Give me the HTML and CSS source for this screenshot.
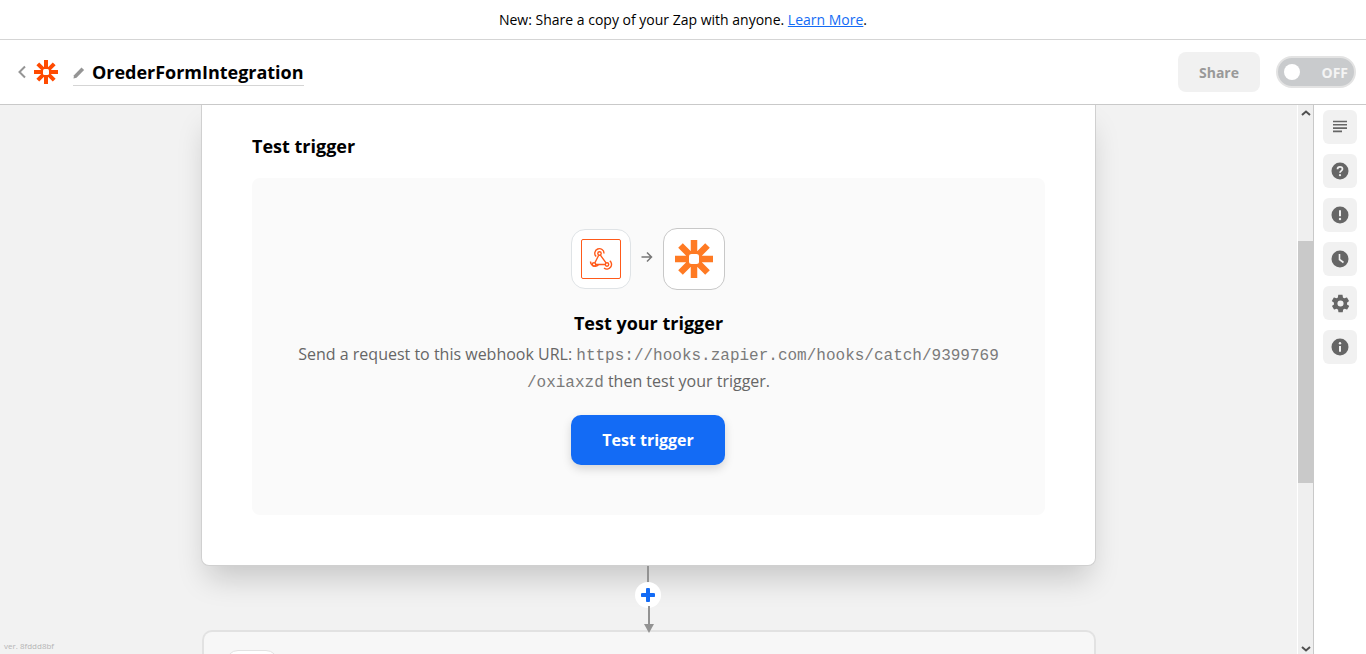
FILE: index.html
```html
<!DOCTYPE html>
<html lang="en">
<head>
    <meta charset="UTF-8">
    <title>OrederFormIntegration</title>
    <link rel="stylesheet" href="styles.css">
</head>
<body>
    <div class="banner">New: Share a copy of your Zap with anyone. <a href="#">Learn More</a>.</div>

    <header class="topbar">
        <svg class="back" width="10" height="14" viewBox="0 0 10 14"><path d="M8 1.500 2.500 7 8 12.500" fill="none" stroke="#959595" stroke-width="2"/></svg>
        <svg class="logo" width="24" height="24" viewBox="0 0 24 24">
            <path d="M12 0v24M0 12h24M3.800 3.800l16.400 16.400M20.200 3.800 3.800 20.200" stroke="#ff4a00" stroke-width="4"/>
            <rect x="9" y="9" width="6" height="6" rx="1.500" fill="#fff"/>
        </svg>
        <div class="zap-name">
            <svg width="12" height="13" viewBox="0 0 12 13"><path d="M0.500 12.500 1 9.300 8.500 1.500l2.600 2.600-7.600 7.700z" fill="#959595"/></svg>
            <span>OrederFormIntegration</span>
        </div>
        <div class="topbar-right">
            <button class="share">Share</button>
            <div class="toggle"><i></i><span>OFF</span></div>
        </div>
    </header>

    <div class="workspace">
        <main class="canvas">
            <section class="card">
                <h2>Test trigger</h2>
                <div class="test-box">
                    <div class="apps">
                        <div class="app-icon small">
                            <div class="hook-frame">
                                <svg width="24" height="24" viewBox="0 0 24 24" fill="none" stroke="#ff5a1a" stroke-width="1.400">
                                    <circle cx="10.500" cy="6.500" r="1.700"/>
                                    <circle cx="5" cy="17.500" r="1.700"/>
                                    <circle cx="18" cy="17.500" r="1.700"/>
                                    <path d="M9.700 8.200 5.900 15.800M6.900 17.500h9.200M11.400 8.200l5.600 7.700"/>
                                    <path d="M7.200 9.600A4.600 4.600 0 1 1 15 6.500M1.500 14.600A4.600 4.600 0 0 0 9.600 17.500M20.800 13.800A4.600 4.600 0 0 1 15 21"/>
                                </svg>
                            </div>
                        </div>
                        <svg class="arrow" width="12" height="12" viewBox="0 0 12 12"><path d="M0.500 6h10M6 1.500 10.500 6 6 10.500" fill="none" stroke="#777" stroke-width="1.500"/></svg>
                        <div class="app-icon big">
                            <svg width="40" height="40" viewBox="0 0 40 40">
                                <path d="M20 1v38M1 20h38M6.500 6.500l27 27M33.500 6.500l-27 27" stroke="#ff7a23" stroke-width="6.500"/>
                                <rect x="15" y="15" width="10" height="10" rx="2.500" fill="#fff"/>
                            </svg>
                        </div>
                    </div>
                    <h3>Test your trigger</h3>
                    <p>Send a request to this webhook URL: <code>https://hooks.zapier.com/hooks/catch/9399769<br>/oxiaxzd</code> then test your trigger.</p>
                    <button class="test-btn">Test trigger</button>
                </div>
            </section>

            <div class="connector">
                <div class="line top"></div>
                <div class="add">
                    <svg width="14" height="14" viewBox="0 0 14 14"><path d="M7 1.500v11M1.500 7h11" stroke="#136bf5" stroke-width="4" stroke-linecap="round"/></svg>
                </div>
                <div class="line bottom"></div>
                <div class="arrowhead"></div>
            </div>

            <section class="card next">
                <div class="next-icon"></div>
            </section>

            <div class="version">ver. 8fddd8bf</div>
        </main>

        <div class="scrollbar">
            <svg class="sb-up" width="10" height="6" viewBox="0 0 10 6"><path d="M1 5 5 1.500 9 5" fill="none" stroke="#505050" stroke-width="2"/></svg>
            <div class="thumb"></div>
            <svg class="sb-down" width="10" height="6" viewBox="0 0 10 6"><path d="M1 1 5 4.500 9 1" fill="none" stroke="#505050" stroke-width="2"/></svg>
        </div>

        <aside class="sidebar">
            <div class="side-btn">
                <svg width="18" height="18" viewBox="0 0 18 18"><path d="M2 3.500h14M2 6.800h14M2 10.100h14M2 13.400h9" stroke="#666" stroke-width="1.600"/></svg>
            </div>
            <div class="side-btn">
                <svg width="18" height="18" viewBox="0 0 18 18"><circle cx="9" cy="9" r="8.500" fill="#666"/><path d="M6.500 7.200C6.500 5.700 7.600 4.800 9 4.800s2.500.9 2.500 2.200c0 1.800-2.500 1.900-2.500 3.700" fill="none" stroke="#f1f1f1" stroke-width="1.700"/><circle cx="9" cy="13.200" r="1.100" fill="#f1f1f1"/></svg>
            </div>
            <div class="side-btn">
                <svg width="18" height="18" viewBox="0 0 18 18"><circle cx="9" cy="9" r="8.500" fill="#666"/><path d="M9 4.200v6" stroke="#f1f1f1" stroke-width="2"/><circle cx="9" cy="13" r="1.200" fill="#f1f1f1"/></svg>
            </div>
            <div class="side-btn">
                <svg width="18" height="18" viewBox="0 0 18 18"><circle cx="9" cy="9" r="8.500" fill="#666"/><path d="M8.500 4v5.500l4 3" fill="none" stroke="#f1f1f1" stroke-width="1.600"/></svg>
            </div>
            <div class="side-btn">
                <svg width="21" height="21" viewBox="0 0 24 24"><path fill="#666" d="M19.400 13c.1-.3.100-.7.100-1s0-.7-.1-1l2.100-1.600c.2-.2.200-.4.100-.6l-2-3.500c-.1-.2-.4-.3-.6-.2l-2.500 1c-.5-.4-1.100-.7-1.700-1l-.4-2.600c0-.3-.2-.5-.5-.5h-4c-.3 0-.5.200-.5.400l-.4 2.700c-.6.300-1.200.6-1.700 1l-2.500-1c-.2-.1-.5 0-.6.200l-2 3.500c-.1.200-.1.500.1.600L4.600 11c0 .3-.1.700-.1 1s0 .7.1 1l-2.100 1.600c-.2.200-.2.400-.1.600l2 3.500c.1.200.4.300.6.200l2.500-1c.5.400 1.100.7 1.700 1l.4 2.700c0 .2.200.4.500.4h4c.3 0 .5-.2.500-.4l.4-2.700c.6-.3 1.200-.6 1.700-1l2.500 1c.2.100.5 0 .6-.2l2-3.500c.1-.2.100-.5-.1-.6zM12 15.500a3.500 3.500 0 1 1 0-7 3.500 3.500 0 0 1 0 7z"/></svg>
            </div>
            <div class="side-btn">
                <svg width="18" height="18" viewBox="0 0 18 18"><circle cx="9" cy="9" r="8.500" fill="#666"/><circle cx="9" cy="5.200" r="1.200" fill="#f1f1f1"/><path d="M9 8v5.800" stroke="#f1f1f1" stroke-width="2"/></svg>
            </div>
        </aside>
    </div>
</body>
</html>
```

FILE: styles.css
```css
html, body {
    height: 100%;
}
body {
    margin: 0;
    font-family: "Open Sans", sans-serif;
    background-color: #fff;
    color: #000;
    overflow: hidden;
}
.banner {
    height: 39px;
    line-height: 39px;
    text-align: center;
    font-size: 14px;
    border-bottom: 1px solid #d5d5d5;
}
.banner a {
    color: #136bf5;
}
.topbar {
    height: 64px;
    display: flex;
    align-items: center;
    padding: 0 10px 0 17px;
    border-bottom: 1px solid #c9c9c9;
}
.back {
    margin-right: 7px;
}
.logo {
    margin-right: 15px;
}
.zap-name {
    display: flex;
    align-items: center;
    gap: 7px;
    height: 25px;
    border-bottom: 1px solid #d5d5d5;
    margin-top: 1px;
}
.zap-name span {
    font-size: 18px;
    font-weight: 700;
    line-height: 24px;
    letter-spacing: -0.02px;
}
.topbar-right {
    margin-left: auto;
    display: flex;
    align-items: center;
    gap: 16px;
}
.share {
    width: 82px;
    height: 40px;
    border: none;
    border-radius: 8px;
    background-color: #f1f1f1;
    color: #999;
    font-family: "Open Sans", sans-serif;
    font-size: 14px;
    font-weight: 700;
}
.toggle {
    width: 80px;
    height: 32px;
    box-sizing: border-box;
    border: 2px solid #e3e3e3;
    border-radius: 16px;
    background-color: #c9cbcd;
    display: flex;
    align-items: center;
    justify-content: space-between;
    padding: 0 6px;
}
.toggle i {
    width: 16px;
    height: 16px;
    border-radius: 50%;
    background-color: #fff;
}
.toggle span {
    color: #f4f4f4;
    font-size: 14px;
    font-weight: 700;
}
.workspace {
    display: flex;
    height: 550px;
    overflow: hidden;
}
.canvas {
    flex: 1;
    position: relative;
    background-color: #f2f2f2;
    border-right: 1px solid #fff;
    overflow: hidden;
}
.card {
    width: 895px;
    margin-left: 201px;
    box-sizing: border-box;
    background-color: #fff;
    border: 1px solid #d0d0d0;
    border-top: none;
    border-radius: 0 0 8px 8px;
    box-shadow: 0 18px 30px -6px rgba(0, 0, 0, 0.18);
    padding: 28px 50px 50px;
}
.card h2 {
    margin: 0 0 18px;
    font-size: 18px;
    line-height: 27px;
    font-weight: 700;
}
.test-box {
    height: 337px;
    box-sizing: border-box;
    background-color: #fafafa;
    border-radius: 8px;
    padding-top: 50px;
    display: flex;
    flex-direction: column;
    align-items: center;
    text-align: center;
}
.apps {
    display: flex;
    align-items: center;
    gap: 10px;
    height: 62px;
    margin-left: -1px;
}
.arrow {
    margin-top: -4px;
}
.app-icon {
    box-sizing: border-box;
    display: flex;
    align-items: center;
    justify-content: center;
    background-color: #fff;
}
.app-icon.small {
    width: 60px;
    height: 60px;
    border: 1px solid #dfe3e6;
    border-radius: 14px;
}
.app-icon.big {
    width: 62px;
    height: 62px;
    border: 1px solid #c8c8c8;
    border-radius: 14px;
}
.hook-frame {
    width: 40px;
    height: 40px;
    box-sizing: border-box;
    border: 1.5px solid #ff5a1a;
    border-radius: 2px;
    display: flex;
    align-items: center;
    justify-content: center;
}
.test-box h3 {
    margin: 20px 0 4px;
    font-size: 18px;
    line-height: 27px;
    font-weight: 700;
}
.test-box p {
    margin: 0;
    font-size: 16px;
    line-height: 27px;
    color: #666;
    width: 720px;
}
.test-box code {
    font-family: "Liberation Mono", monospace;
    font-size: 16px;
    line-height: 1;
    color: #7a7a7a;
}
.test-btn {
    margin-top: 20px;
    margin-left: -1px;
    width: 154px;
    height: 50px;
    border: none;
    border-radius: 10px;
    background-color: #136bf5;
    color: #fff;
    font-family: "Open Sans", sans-serif;
    font-size: 16px;
    font-weight: 700;
    box-shadow: 0 4px 10px rgba(0, 0, 0, 0.15);
}
.connector {
    position: relative;
    width: 2px;
    height: 64px;
    margin-left: 647px;
}
.line {
    position: absolute;
    left: 0;
    width: 2px;
    background-color: #939393;
}
.line.top {
    top: 0;
    height: 20px;
}
.line.bottom {
    top: 40px;
    height: 20px;
    left: 1px;
}
.add {
    position: absolute;
    left: -12px;
    top: 16px;
    width: 26px;
    height: 26px;
    border-radius: 50%;
    background-color: #fff;
    display: flex;
    align-items: center;
    justify-content: center;
}
.arrowhead {
    position: absolute;
    left: -3px;
    top: 58px;
    width: 0;
    height: 0;
    border-left: 5px solid transparent;
    border-right: 5px solid transparent;
    border-top: 9px solid #939393;
}
.card.next {
    width: 894px;
    margin-left: 202px;
    height: 40px;
    padding: 18px 0 0 22px;
    background-color: #f7f7f7;
    border: 2px solid #e2e2e2;
    border-bottom: none;
    border-radius: 10px 10px 0 0;
    box-shadow: none;
}
.next-icon {
    width: 50px;
    height: 40px;
    border: 1px solid #e2e2e2;
    border-radius: 12px;
    background-color: #fff;
}
.version {
    position: absolute;
    left: 4px;
    bottom: 4px;
    font-size: 8px;
    line-height: 11px;
    color: #b5b5b5;
}
.scrollbar {
    width: 15px;
    flex: none;
    background-color: #efefef;
    border-right: 1px solid #c9c9c9;
    display: flex;
    flex-direction: column;
    align-items: center;
    position: relative;
}
.thumb {
    position: absolute;
    top: 136px;
    left: 0;
    width: 15px;
    height: 242px;
    background-color: #c9c9c9;
}
.sb-up {
    margin-top: 5px;
}
.sb-down {
    margin-top: auto;
    margin-bottom: 3px;
}
.sidebar {
    width: 52px;
    flex: none;
    display: flex;
    flex-direction: column;
    align-items: center;
    gap: 10px;
    padding-top: 5px;
    box-sizing: border-box;
}
.side-btn {
    width: 34px;
    height: 34px;
    border-radius: 6px;
    background-color: #f1f1f1;
    display: flex;
    align-items: center;
    justify-content: center;
}
```
